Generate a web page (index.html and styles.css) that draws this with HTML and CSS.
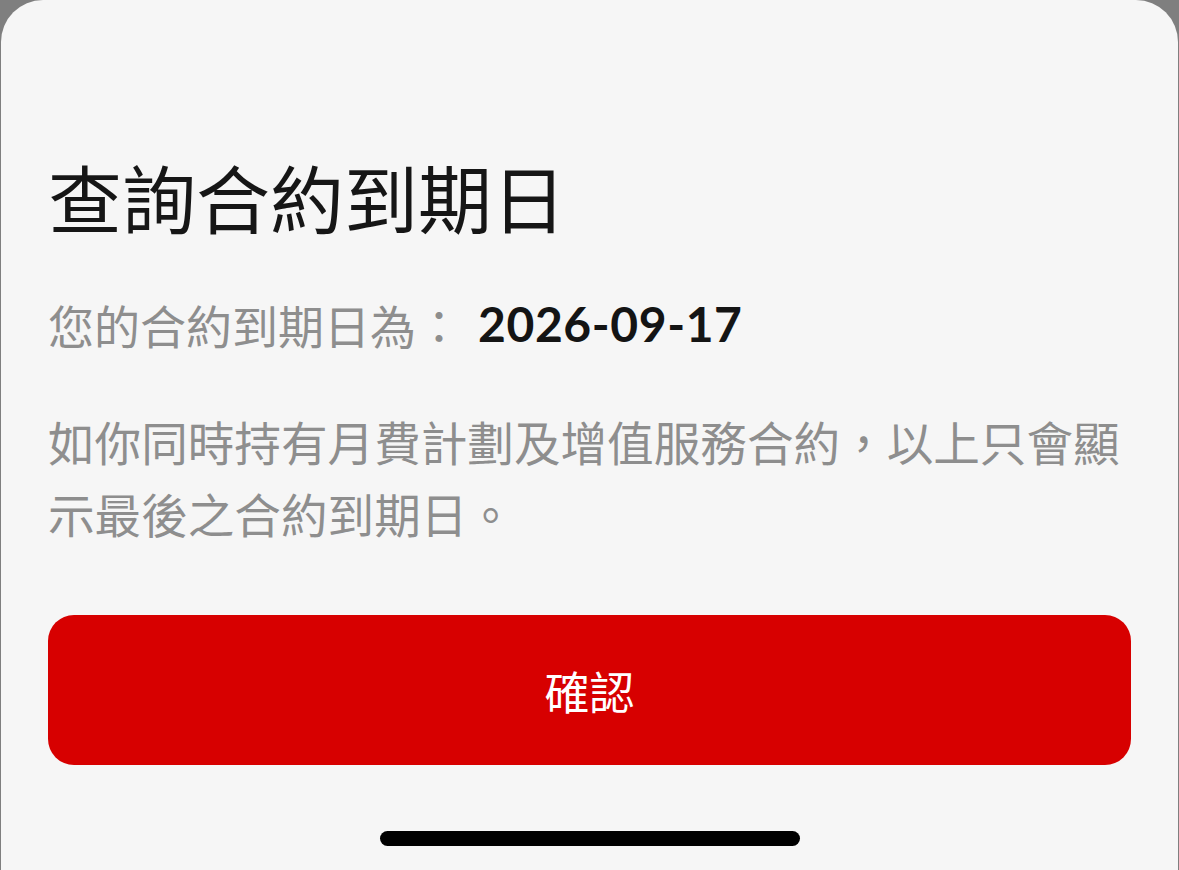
FILE: index.html
```html
<!DOCTYPE html>
<html lang="zh-Hant">
<head>
<meta charset="utf-8">
<title>查詢合約到期日</title>
<link rel="stylesheet" href="styles.css">
</head>
<body>
<div class="sheet">
  <h1 class="title">查詢合約到期日</h1>
  <p class="date-row"><span class="label">您的合約到期日為：</span><span class="date">2026-09-17</span></p>
  <p class="note">如你同時持有月費計劃及增值服務合約，以上只會顯示最後之合約到期日。</p>
  <button class="confirm" type="button">確認</button>
  <div class="home-indicator"></div>
</div>
</body>
</html>
```
FILE: styles.css
```css
html, body {
  margin: 0;
  padding: 0;
  height: 100%;
}
body {
  background: #7f7f7f;
  font-family: "Noto Sans CJK TC", "Noto Sans", sans-serif;
  overflow: hidden;
}
.sheet {
  box-sizing: border-box;
  margin: 0 1px;
  height: 870px;
  background: #f6f6f6;
  border-radius: 42px 42px 0 0;
  padding: 148px 47px 0;
  display: flex;
  flex-direction: column;
}
.title {
  margin: 0;
  font-size: 74px;
  line-height: 96px;
  font-weight: 400;
  color: #161616;
}
.date-row {
  margin: 50px 0 0;
  font-size: 46px;
  line-height: 60px;
  display: flex;
  align-items: center;
}
.label {
  color: #8e8e8e;
}
.date {
  margin-left: 16px;
  font-family: "Lato", "Noto Sans", sans-serif;
  font-weight: 700;
  font-size: 48px;
  letter-spacing: 0.6px;
  color: #141414;
}
.note {
  margin: 51px 0 0;
  font-size: 46.6px;
  line-height: 72px;
  color: #8e8e8e;
}
.confirm {
  margin-top: 66px;
  height: 150px;
  border: none;
  border-radius: 26px;
  background: #d70000;
  color: #ffffff;
  font-family: "Noto Sans CJK TC", sans-serif;
  font-size: 45px;
  padding: 0;
}
.home-indicator {
  align-self: center;
  margin-top: 66px;
  width: 420px;
  height: 15px;
  border-radius: 8px;
  background: #000000;
}
```
